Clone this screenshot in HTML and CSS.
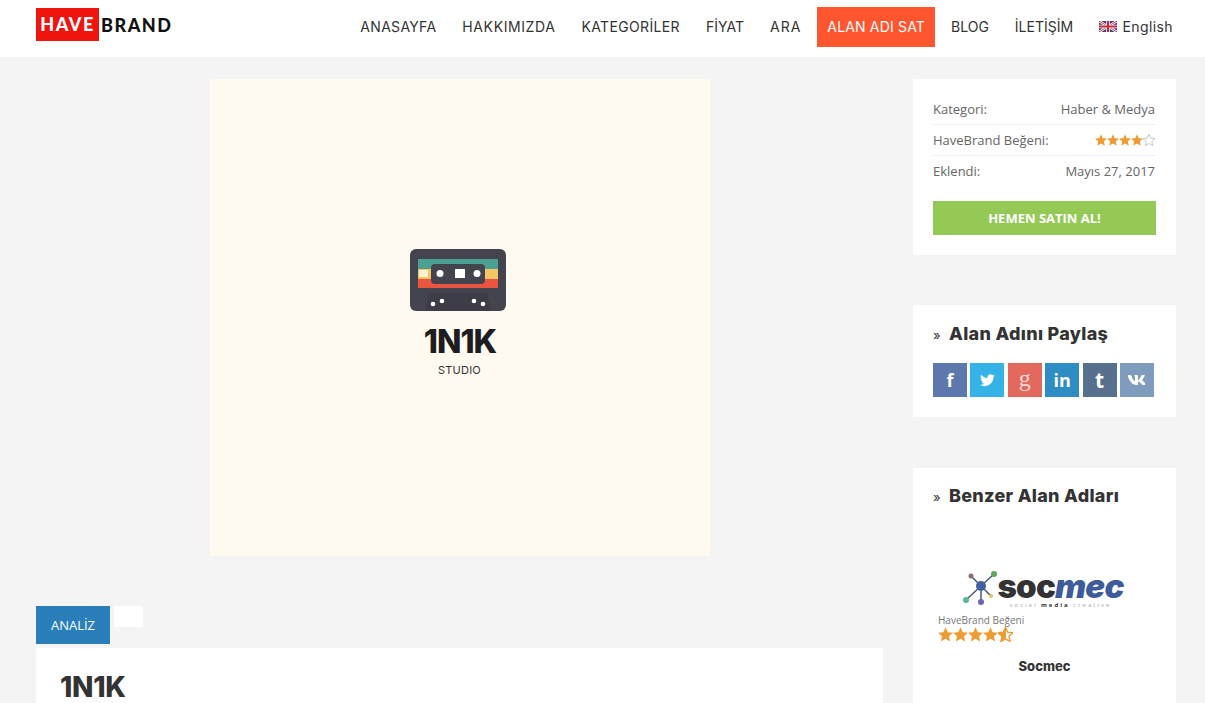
FILE: index.html
```html
<!DOCTYPE html>
<html lang="en">
<head>
    <meta charset="UTF-8">
    <meta name="viewport" content="width=device-width, initial-scale=1.0">
    <title>1N1K - HaveBrand</title>
    <link rel="stylesheet" href="styles.css">
</head>
<body>
<svg class="defs" width="0" height="0">
    <linearGradient id="half"><stop offset="52%" stop-color="#ee9b33"/><stop offset="52%" stop-color="#fff"/></linearGradient>
    <symbol id="star" viewBox="1 1 22 22"><path d="M12 1.500l3.200 7.100 7.800.8-5.800 5.200 1.600 7.700L12 18.400l-6.800 3.900 1.600-7.700L1 9.400l7.800-.8z"/></symbol>
</svg>
<div class="page">
<header class="topbar">
    <a class="logo"><span class="logo-have">HAVE</span><span class="logo-brand">BRAND</span></a>
    <ul class="nav">
        <li>ANASAYFA</li>
        <li>HAKKIMIZDA</li>
        <li>KATEGORİLER</li>
        <li>FİYAT</li>
        <li>ARA</li>
        <li class="nav-active">ALAN ADI SAT</li>
        <li>BLOG</li>
        <li>İLETİŞİM</li>
        <li class="nav-lang">
            <svg width="18" height="11" viewBox="0 0 60 36">
                <rect width="60" height="36" fill="#2b3a78"/>
                <path d="M0 0L60 36M60 0L0 36" stroke="#fff" stroke-width="8"/>
                <path d="M0 0L60 36M60 0L0 36" stroke="#c8283c" stroke-width="3"/>
                <path d="M30 0V36M0 18H60" stroke="#fff" stroke-width="12"/>
                <path d="M30 0V36M0 18H60" stroke="#c8283c" stroke-width="7"/>
            </svg>
            English
        </li>
    </ul>
</header>

<div class="layout">
    <main class="main">
        <div class="cover">
            <svg class="tape" width="96" height="62" viewBox="0 0 96 62">
                <rect width="96" height="62" rx="6" fill="#44444f"/>
                <path d="M15 62l4-18h58l4 18z" fill="#3d3d47"/>
                <rect x="8" y="10" width="80" height="10" fill="#4b9f93"/>
                <rect x="8" y="20" width="80" height="10" fill="#f3c566"/>
                <rect x="8" y="30" width="80" height="9" fill="#e9553f"/>
                <rect x="9" y="21" width="9" height="7" rx="1" fill="#fdf3d0"/>
                <rect x="21" y="15" width="54" height="20" rx="4" fill="#44444f"/>
                <circle cx="30" cy="24.500" r="3.500" fill="#fff"/>
                <circle cx="67" cy="24.500" r="3.500" fill="#fff"/>
                <rect x="45" y="20" width="10" height="9" fill="#fff"/>
                <circle cx="23" cy="55" r="2.300" fill="#fff"/>
                <circle cx="32" cy="52" r="2.300" fill="#fff"/>
                <circle cx="64" cy="52" r="2.300" fill="#fff"/>
                <circle cx="73" cy="55" r="2.300" fill="#fff"/>
            </svg>
            <div class="cover-name">1N1K</div>
            <div class="cover-sub">STUDIO</div>
        </div>
        <div class="tabs">
            <div class="tab tab-active">ANALİZ</div>
            <div class="tab tab-blank"></div>
        </div>
        <section class="detail">
            <h1>1N1K</h1>
        </section>
    </main>

    <aside class="sidebar">
        <div class="box box-info">
            <div class="info-row"><span>Kategori:</span><span>Haber &amp; Medya</span></div>
            <div class="info-row">
                <span>HaveBrand Beğeni:</span>
                <span class="stars stars-small">
                    <svg><use href="#star"/></svg><svg><use href="#star"/></svg><svg><use href="#star"/></svg><svg><use href="#star"/></svg><svg class="star-empty"><use href="#star"/></svg>
                </span>
            </div>
            <div class="info-row"><span>Eklendi:</span><span>Mayıs 27, 2017</span></div>
            <a class="buy-btn">HEMEN SATIN AL!</a>
        </div>

        <div class="box box-share">
            <h3 class="box-title"><span class="raquo">»</span>Alan Adını Paylaş</h3>
            <div class="share">
                <a class="share-fb">f</a>
                <a class="share-tw">
                    <svg width="15" height="13" viewBox="0 0 24 20"><path fill="#fff" d="M24 2.400c-.9.400-1.800.700-2.800.800 1-.6 1.800-1.600 2.200-2.700-.9.600-2 1-3.100 1.200A4.900 4.900 0 0 0 11.900 6.200C7.800 6 4.200 4 1.700.9c-1.300 2.200-.7 5 1.500 6.500-.8 0-1.600-.2-2.200-.6 0 2.300 1.600 4.400 3.900 4.900-.7.200-1.500.2-2.200.1.600 2 2.400 3.400 4.600 3.400A9.900 9.900 0 0 1 0 16.700 14 14 0 0 0 7.500 19c9.100 0 14.300-7.700 14-14.600 1-.7 1.800-1.500 2.500-2z"/></svg>
                </a>
                <a class="share-gp">g</a>
                <a class="share-in">in</a>
                <a class="share-tb">t</a>
                <a class="share-vk">
                    <svg width="17" height="10" viewBox="0 0 24 14"><path fill="#fff" d="M23.500 1c.2-.6 0-1-.8-1h-2.700c-.7 0-1 .4-1.200.8 0 0-1.300 3.300-3.200 5.400-.6.600-.9.800-1.200.8-.2 0-.4-.2-.4-.8V1c0-.7-.2-1-.8-1H9.500c-.4 0-.7.300-.7.600 0 .7 1 .8 1.100 2.700v4.100c0 .9-.2 1.100-.5 1.100-.9 0-3.200-3.400-4.500-7.300C4.100.4 3.900 0 3.200 0H.5C-.3 0-.4.400-.4.800c0 .7.900 4.300 4.300 9C6.100 13 9.400 14 12.300 14c1.800 0 2-.4 2-1.100v-2.400c0-.8.200-.9.700-.9.400 0 1.100.2 2.700 1.800 1.900 1.900 2.200 2.600 3.200 2.600h2.700c.8 0 1.200-.4 1-1.200-.3-.8-1.100-1.900-2.300-3.200-.6-.7-1.600-1.500-1.900-1.900-.4-.5-.3-.8 0-1.200 0 0 3.300-4.700 3.100-5.500z"/></svg>
                </a>
            </div>
        </div>

        <div class="box box-similar">
            <h3 class="box-title"><span class="raquo">»</span>Benzer Alan Adları</h3>
            <div class="similar-item">
                <div class="soc-logo">
                    <svg width="36" height="36" viewBox="0 0 36 36">
                        <path d="M18 15L8 5M18 15L31 3M18 15L3 29M18 15V31M18 15L28 25" stroke="#4a5a78" stroke-width="1.500"/>
                        <circle cx="18" cy="15" r="5" fill="#41609f"/>
                        <circle cx="8" cy="5" r="2.500" fill="#8a6f68"/>
                        <circle cx="31" cy="3" r="3" fill="#5da75a"/>
                        <circle cx="3" cy="29" r="3" fill="#58b795"/>
                        <circle cx="18" cy="31" r="3" fill="#6a67ae"/>
                        <circle cx="28" cy="25" r="2" fill="#e3c25d"/>
                    </svg>
                    <div class="soc-word">
                        <div class="soc-name">soc<em>mec</em></div>
                        <div class="soc-tag">social <b>media</b> creative</div>
                    </div>
                </div>
                <div class="similar-label">HaveBrand Beğeni</div>
                <div class="stars stars-big">
                    <svg><use href="#star"/></svg><svg><use href="#star"/></svg><svg><use href="#star"/></svg><svg><use href="#star"/></svg><svg class="star-half"><use href="#star"/></svg>
                </div>
                <div class="similar-name">Socmec</div>
            </div>
        </div>
    </aside>
</div>
</div>
</body>
</html>
```

FILE: styles.css
```css
html, body {
    margin: 0;
    padding: 0;
}
body {
    background: #f4f4f4;
    font-family: 'Open Sans', sans-serif;
    color: #666;
}
.defs {
    position: absolute;
}
.page {
    height: 703px;
    overflow: hidden;
}
.topbar {
    height: 57px;
    background: #fff;
    display: flex;
    justify-content: space-between;
    align-items: flex-start;
    padding: 0 19px 0 36px;
}
.logo {
    display: flex;
    align-items: center;
    margin-top: 8px;
    font-family: 'Lato', sans-serif;
    font-weight: 900;
    font-size: 18px;
    letter-spacing: 1.500px;
}
.logo-have {
    background: #f0140f;
    color: #fff;
    width: 63px;
    height: 33px;
    line-height: 33px;
    text-align: center;
}
.logo-brand {
    color: #111;
    margin-left: 2px;
}
.nav {
    list-style-type: none;
    display: flex;
    margin: 7px 0 0;
    padding: 0;
    font-family: 'Inter', sans-serif;
    font-size: 14px;
    color: #333;
}
.nav li {
    height: 40px;
    line-height: 40px;
    padding: 0 10px;
    margin: 0 3px;
    white-space: nowrap;
}
/* the original nav font runs wider, so spacing is tuned per item */
.nav li:nth-child(1) { letter-spacing: .3px; }
.nav li:nth-child(2) { letter-spacing: .6px; }
.nav li:nth-child(3) { letter-spacing: .35px; }
.nav li:nth-child(5) { letter-spacing: 1px; }
.nav .nav-active {
    background: #ff5630;
    color: #fff;
    letter-spacing: .17px;
}
.nav .nav-lang {
    letter-spacing: .4px;
}
.nav-lang svg {
    margin-right: 1px;
}
.layout {
    display: flex;
    padding: 22px 29px 0 36px;
    gap: 30px;
}
.main {
    width: 847px;
    flex-shrink: 0;
}
.cover {
    width: 500px;
    height: 477px;
    margin: 0 auto;
    background: #fffaef;
    display: flex;
    flex-direction: column;
    align-items: center;
    padding-top: 170px;
    box-sizing: border-box;
}
.tape {
    margin-left: -4px;
}
.cover-name {
    margin: 12px 0 0 1px;
    font-family: 'Inter', sans-serif;
    font-weight: 800;
    font-size: 32px;
    line-height: 38px;
    letter-spacing: -1px;
    color: #1d1d1f;
}
.cover-sub {
    margin-top: 2px;
    font-family: 'Inter', sans-serif;
    font-size: 11px;
    letter-spacing: .2px;
    color: #333;
}
.tabs {
    display: flex;
    align-items: flex-start;
    gap: 4px;
    margin-top: 50px;
}
.tab-active {
    width: 74px;
    height: 38px;
    line-height: 38px;
    text-align: center;
    background: #2a7fba;
    color: #fff;
    font-size: 13px;
}
.tab-blank {
    width: 29px;
    height: 21px;
    background: #fff;
}
.detail {
    margin-top: 4px;
    background: #fff;
    padding: 24px;
    height: 200px;
}
.detail h1 {
    margin: 0;
    font-family: 'Inter', sans-serif;
    font-weight: 800;
    font-size: 28px;
    line-height: 30px;
    letter-spacing: -.3px;
    color: #333;
}
.sidebar {
    width: 263px;
    flex-shrink: 0;
}
.box {
    background: #fff;
    padding: 0 20px;
    box-sizing: border-box;
}
.box-info {
    height: 176px;
    padding-top: 15px;
    margin-bottom: 50px;
}
.info-row {
    display: flex;
    justify-content: space-between;
    align-items: center;
    height: 30px;
    padding-right: 1px;
    border-bottom: 1px solid #eee;
    font-size: 13px;
    color: #666;
}
.info-row:nth-child(3) {
    border-bottom: 0;
}
.buy-btn {
    display: block;
    margin-top: 15px;
    height: 34px;
    line-height: 34px;
    text-align: center;
    background: #94c955;
    color: #fff;
    font-weight: 700;
    font-size: 13px;
}
.stars {
    display: flex;
    fill: #ee9b33;
}
.stars-small svg {
    width: 12px;
    height: 12px;
}
.stars-big svg {
    width: 15px;
    height: 15px;
}
.star-empty {
    fill: #fff;
    stroke: #bbb;
    stroke-width: 1.500;
}
.star-half {
    fill: url(#half);
    stroke: #ee9b33;
    stroke-width: 2;
}
.box-share {
    height: 112px;
    padding-top: 17px;
    margin-bottom: 51px;
}
.box-title {
    margin: 0;
    font-family: 'Inter', sans-serif;
    font-weight: 800;
    font-size: 18px;
    line-height: 24px;
    letter-spacing: .3px;
    color: #333;
}
.raquo {
    display: inline-block;
    width: 16px;
    font-weight: 400;
    font-size: 13px;
}
.share {
    display: flex;
    gap: 3.400px;
    margin-top: 16px;
}
.share a {
    width: 34px;
    height: 34px;
    display: flex;
    align-items: center;
    justify-content: center;
    color: #fff;
    font-family: 'Open Sans', sans-serif;
    font-weight: 700;
    font-size: 18px;
}
.share-fb { background: #5d78ad; }
.share-tw { background: #35b2e8; }
.share-gp { background: #e3685e; }
.share-in { background: #2e8dc2; }
.share-tb { background: #56708e; }
.share-vk { background: #7f9bbd; }
.share .share-gp {
    font-family: 'Liberation Serif', serif;
    font-weight: 400;
    font-size: 24px;
    padding-bottom: 4px;
    box-sizing: border-box;
    color: #fbd9d5;
}
.share .share-tb {
    font-size: 21px;
}
.box-similar {
    height: 300px;
    padding-top: 16px;
}
.similar-item {
    margin-top: 62px;
}
.soc-logo {
    display: flex;
    align-items: flex-start;
    justify-content: center;
    padding-right: 3px;
}
.soc-logo svg {
    margin-right: -1px;
}
.soc-word {
    margin-top: -1px;
}
.soc-name {
    font-family: 'Inter', sans-serif;
    font-weight: 900;
    font-size: 33px;
    line-height: 32px;
    letter-spacing: -.8px;
    color: #333;
}
.soc-name em {
    color: #3e5c99;
}
.soc-tag {
    font-size: 6px;
    line-height: 7px;
    letter-spacing: 2px;
    text-align: center;
    color: #aaa;
}
.soc-tag b {
    color: #333;
}
.similar-label {
    margin: 5px 0 0 5px;
    font-size: 10px;
    line-height: 13px;
    color: #777;
}
.stars-big {
    margin-left: 5px;
}
.similar-name {
    margin-top: 16px;
    text-align: center;
    font-family: 'Inter', sans-serif;
    font-weight: 800;
    font-size: 13px;
    color: #333;
}
```
